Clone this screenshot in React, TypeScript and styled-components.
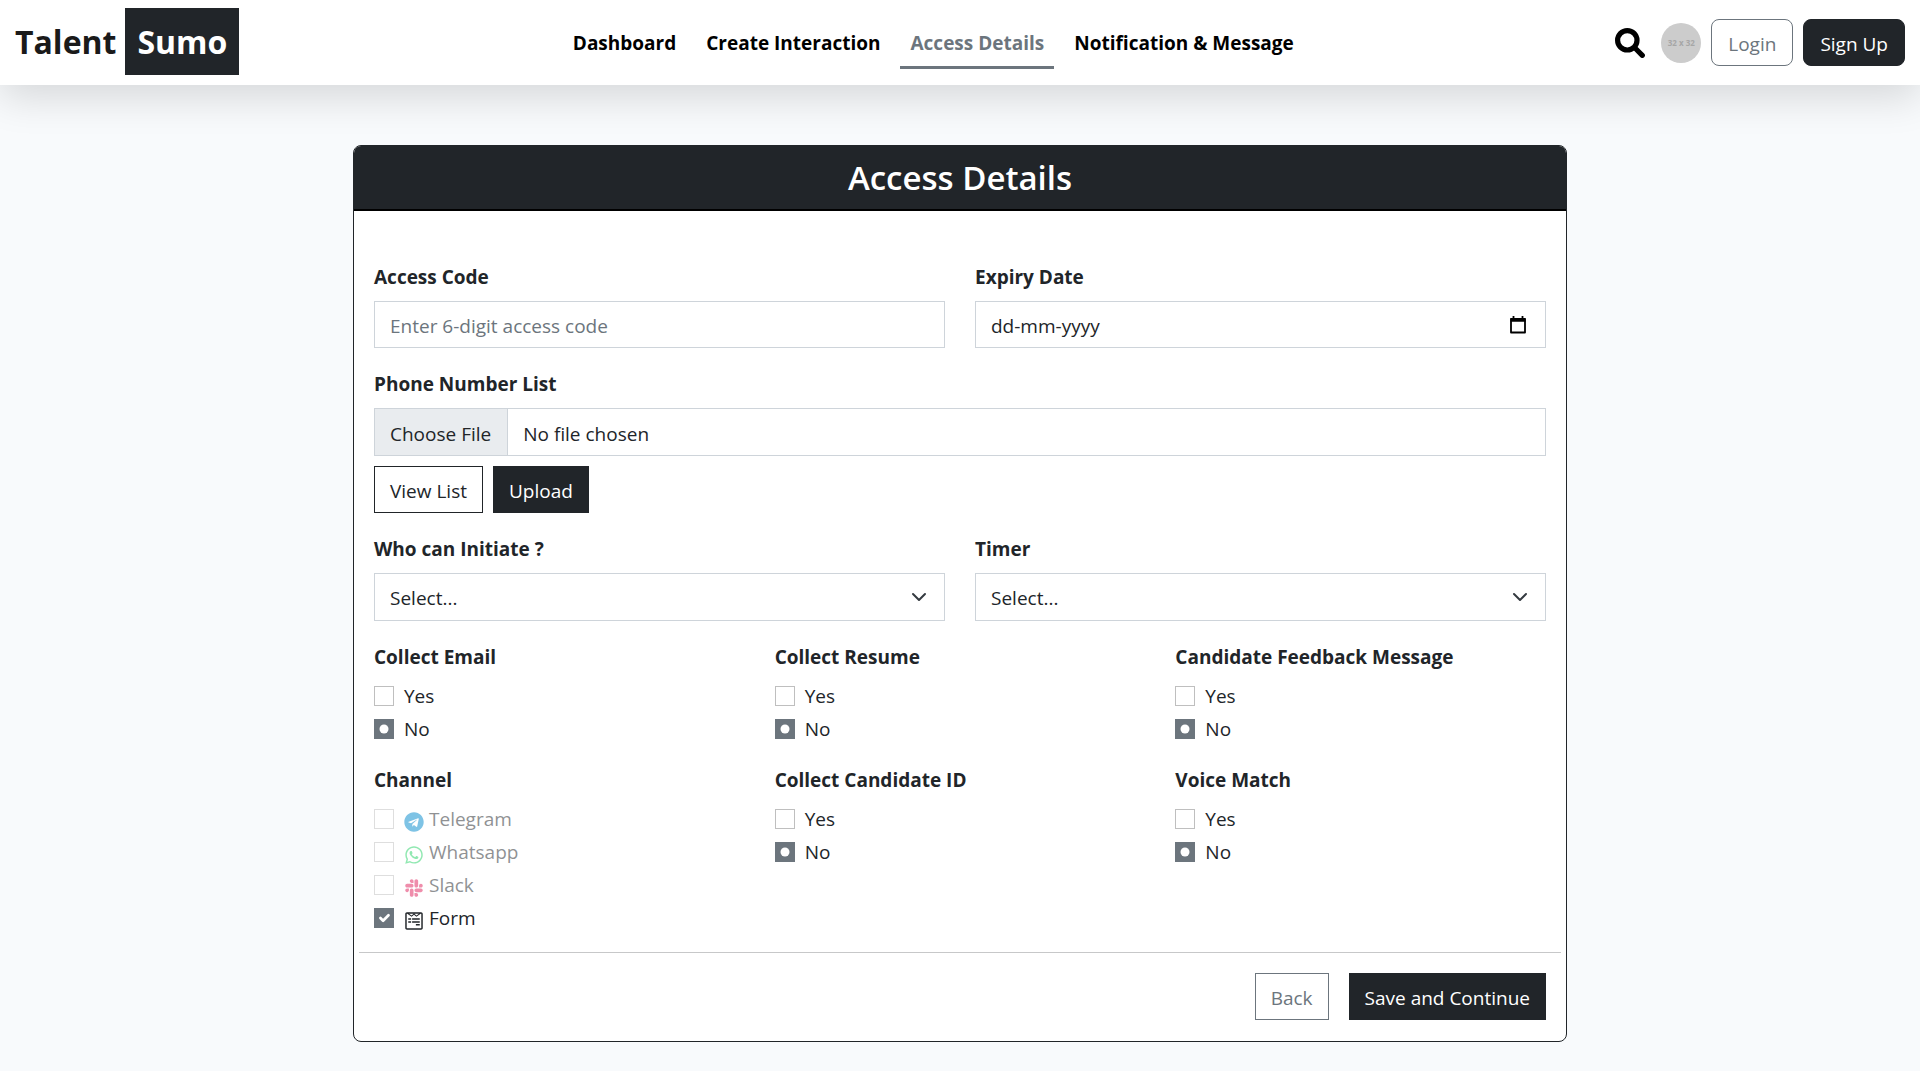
import React, { useState } from "react";
import styled, { createGlobalStyle, css } from "styled-components";
import { FaSlack, FaTelegram, FaWhatsapp, FaWpforms } from "react-icons/fa";

const DARK = "#212529";
const GREY = "#6c757d";
const LINE = "#ced4da";

const svgUrl = (body: string) => `url("data:image/svg+xml,${encodeURIComponent(body)}")`;
const chevron = svgUrl(
  "<svg xmlns='http://www.w3.org/2000/svg' viewBox='0 0 16 16'><path fill='none' stroke='#343a40' stroke-linecap='round' stroke-linejoin='round' stroke-width='2' d='m2 5 6 6 6-6'/></svg>"
);
const dot = svgUrl("<svg xmlns='http://www.w3.org/2000/svg' viewBox='-4 -4 8 8'><circle r='2' fill='#fff'/></svg>");
const tick = svgUrl(
  "<svg xmlns='http://www.w3.org/2000/svg' viewBox='0 0 20 20'><path fill='none' stroke='#fff' stroke-linecap='round' stroke-linejoin='round' stroke-width='3' d='m6 10 3 3 6-6'/></svg>"
);

const GlobalStyle = createGlobalStyle`
  *, *::before, *::after { box-sizing: border-box; }
  body {
    margin: 0;
    background: #f8fafc;
    color: ${DARK};
    font-family: "Open Sans", "Noto Sans", sans-serif;
    font-size: 19px;
    line-height: 30px;
  }
  button, input, select { font: inherit; color: inherit; border-radius: 0; }
`;

const Header = styled.header`
  display: flex;
  align-items: center;
  justify-content: space-between;
  padding: 8px 15px;
  min-height: 85px;
  background: #fff;
  box-shadow: 0 12px 40px rgba(0, 0, 0, 0.14);
`;

const Brand = styled.a`
  display: flex;
  align-items: center;
  gap: 9px;
  align-self: flex-start;
  margin-right: 12px;
  color: #1a1a1a;
  font-size: 32px;
  font-weight: 700;
  line-height: 67px;
  text-decoration: none;
`;

const BrandBox = styled.span`
  padding: 0 12px;
  background: ${DARK};
  color: #fff;
`;

const Nav = styled.nav`
  display: flex;
  gap: 10px;
`;

const NavLink = styled.a<{ $active?: boolean }>`
  padding: 12px 10px 8px;
  border-bottom: 3px solid ${(p) => (p.$active ? GREY : "transparent")};
  color: ${(p) => (p.$active ? GREY : "#000")};
  font-weight: 700;
  text-decoration: none;
`;

const Actions = styled.div`
  display: flex;
  align-items: center;
  gap: 10px;
`;

const IconButton = styled.button`
  display: flex;
  padding: 0;
  border: 0;
  background: none;
  cursor: pointer;
`;

const SearchButton = styled(IconButton)`
  margin-right: 6px;
`;

const Avatar = styled.span`
  display: grid;
  place-items: center;
  width: 40px;
  height: 40px;
  border-radius: 50%;
  background: #ccc;
  color: #a6a6a6;
  font-size: 8px;
  font-weight: 700;
  line-height: 8px;
`;

const Button = styled.button<{ $tone?: "solid" | "outline" | "muted"; $round?: boolean }>`
  height: 47px;
  padding: 2px ${(p) => (p.$round ? "16px" : "15px")} 0;
  border: 1px solid ${DARK};
  border-radius: ${(p) => (p.$round ? "8px" : "0")};
  background: #fff;
  cursor: pointer;
  ${(p) => p.$tone === "solid" && css`background: ${DARK}; color: #fff;`}
  ${(p) => p.$tone === "muted" && css`border-color: ${GREY}; color: ${GREY};`}
`;

const Main = styled.main`
  padding: 60px 16px 30px;
`;

const Card = styled.form`
  max-width: 1214px;
  margin: 0 auto;
  border: 1px solid ${DARK};
  border-radius: 8px;
  background: #fff;
  overflow: hidden;
`;

const CardTitle = styled.h1`
  margin: 0;
  padding-top: 1px;
  border-bottom: 2px solid #000;
  background: ${DARK};
  color: #fff;
  font-size: 33px;
  font-weight: 600;
  line-height: 62px;
  text-align: center;
`;

const Fields = styled.div`
  display: grid;
  gap: 20px;
  padding: 50px 20px 19px;
`;

const Columns = styled.div<{ $count: number }>`
  display: grid;
  grid-template-columns: repeat(${(p) => p.$count}, minmax(0, 1fr));
  gap: 20px 30px;
`;

const Field = styled.div`
  display: grid;
  gap: 10px;
  align-content: start;
`;

const Label = styled.label`
  padding-top: 2px;
  font-weight: 700;
  line-height: 28px;
`;

const control = css`
  width: 100%;
  border: 1px solid ${LINE};
  background-color: #fff;
  outline-color: ${GREY};
`;

const TextInput = styled.input`
  ${control}
  height: 47px;
  padding: 2px 15px 0;
  &::placeholder { color: ${GREY}; opacity: 1; }
`;

const DateBox = styled.div`
  ${control}
  display: flex;
  align-items: center;
  height: 47px;
  padding: 0 18px 0 15px;
`;

const DateInput = styled.input`
  flex: 1;
  min-width: 0;
  padding: 2px 0 0;
  border: 0;
  outline: 0;
  background: none;
  &::placeholder { color: ${DARK}; opacity: 1; }
`;

const FileInput = styled.input`
  ${control}
  height: 48px;
  padding: 0;
  line-height: 46px;
  &::file-selector-button {
    height: 46px;
    margin: 0 15px 0 0;
    padding: 2px 16px 0 15px;
    border: 0;
    border-right: 1px solid ${LINE};
    background: #e9ecef;
    color: ${DARK};
    font: inherit;
  }
`;

const Select = styled.select`
  ${control}
  height: 48px;
  padding: 2px 45px 0 15px;
  appearance: none;
  background-image: ${chevron};
  background-repeat: no-repeat;
  background-position: right 17px center;
  background-size: 16px 16px;
`;

const ButtonRow = styled.div<{ $end?: boolean }>`
  display: flex;
  justify-content: ${(p) => (p.$end ? "flex-end" : "flex-start")};
  gap: ${(p) => (p.$end ? "20px" : "10px")};
  ${(p) => p.$end && css`padding: 20px 20px 21px;`}
`;

const Group = styled.fieldset`
  min-width: 0;
  margin: 0;
  padding: 0;
  border: 0;
`;

const Legend = styled.legend`
  margin-bottom: 10px;
  padding: 2px 0 0;
  font-weight: 700;
  line-height: 28px;
`;

const Choices = styled.div`
  display: grid;
  gap: 3px;
`;

const Choice = styled.label<{ $faded?: boolean }>`
  display: flex;
  align-items: center;
  gap: 10px;
  opacity: ${(p) => (p.$faded ? 0.5 : 1)};
`;

const Box = styled.input`
  width: 20px;
  height: 20px;
  margin: 0;
  appearance: none;
  border: 1px solid rgba(0, 0, 0, 0.25);
  background: #fff center / 100% no-repeat;
  &:checked { border-color: ${GREY}; background-color: ${GREY}; }
  &[type="radio"]:checked { background-image: ${dot}; }
  &[type="checkbox"]:checked { background-image: ${tick}; }
`;

const ChannelName = styled.span<{ $tint: string }>`
  display: flex;
  gap: 5px;
  svg {
    width: 20px;
    height: 20px;
    margin-top: 8px;
    color: ${(p) => p.$tint};
  }
`;

const Divider = styled.hr`
  height: 1px;
  margin: 0 5px;
  border: 0;
  background: #c7c8c9;
`;

const SearchIcon = () => (
  <svg width="30" height="30" viewBox="0 0 30 30" fill="none" stroke="#000" strokeLinecap="round" aria-hidden="true">
    <circle cx="12.3" cy="12.3" r="9.7" strokeWidth="5.2" />
    <path d="M20 20l7.3 7.3" strokeWidth="5.2" />
  </svg>
);

const CalendarIcon = () => (
  <svg width="18" height="20" viewBox="0 0 18 20" fill="none" stroke="#000" aria-hidden="true">
    <path d="M2 4h14v13.5H2z" strokeWidth="1.8" strokeLinejoin="round" />
    <path d="M1.5 5h15" strokeWidth="3.5" />
    <path d="M4.5 1v3M13.5 1v3" strokeWidth="1.8" />
  </svg>
);

const YesNo = ({ title, name }: { title: string; name: string }) => {
  const [value, setValue] = useState("No");
  return (
    <Group>
      <Legend>{title}</Legend>
      <Choices>
        {["Yes", "No"].map((option) => (
          <Choice key={option}>
            <Box type="radio" name={name} checked={value === option} onChange={() => setValue(option)} />
            {option}
          </Choice>
        ))}
      </Choices>
    </Group>
  );
};

const channels = [
  { name: "Telegram", Icon: FaTelegram, tint: "#0088cc", disabled: true },
  { name: "Whatsapp", Icon: FaWhatsapp, tint: "#25d366", disabled: true },
  { name: "Slack", Icon: FaSlack, tint: "#e01e5a", disabled: true },
  { name: "Form", Icon: FaWpforms, tint: DARK, disabled: false },
];

const Channels = () => (
  <Group>
    <Legend>Channel</Legend>
    <Choices>
      {channels.map(({ name, Icon, tint, disabled }) => (
        <Choice key={name} $faded={disabled}>
          <Box type="checkbox" name="channel" value={name} disabled={disabled} defaultChecked={!disabled} />
          <ChannelName $tint={tint}>
            <Icon aria-hidden="true" />
            {name}
          </ChannelName>
        </Choice>
      ))}
    </Choices>
  </Group>
);

const links = ["Dashboard", "Create Interaction", "Access Details", "Notification & Message"];

export default function App() {
  return (
    <>
      <GlobalStyle />
      <Header>
        <Brand href="#">
          Talent <BrandBox>Sumo</BrandBox>
        </Brand>
        <Nav>
          {links.map((link) => (
            <NavLink key={link} href="#" $active={link === "Access Details"}>
              {link}
            </NavLink>
          ))}
        </Nav>
        <Actions>
          <SearchButton type="button" aria-label="Search">
            <SearchIcon />
          </SearchButton>
          <Avatar>32 x 32</Avatar>
          <Button type="button" $tone="muted" $round>Login</Button>
          <Button type="button" $tone="solid" $round>Sign Up</Button>
        </Actions>
      </Header>
      <Main>
        <Card onSubmit={(e) => e.preventDefault()}>
          <CardTitle>Access Details</CardTitle>
          <Fields>
            <Columns $count={2}>
              <Field>
                <Label htmlFor="code">Access Code</Label>
                <TextInput id="code" type="text" placeholder="Enter 6-digit access code" />
              </Field>
              <Field>
                <Label htmlFor="expiry">Expiry Date</Label>
                <DateBox>
                  <DateInput id="expiry" type="text" inputMode="numeric" placeholder="dd-mm-yyyy" />
                  <IconButton type="button" aria-label="Pick a date">
                    <CalendarIcon />
                  </IconButton>
                </DateBox>
              </Field>
            </Columns>
            <Field>
              <Label htmlFor="phones">Phone Number List</Label>
              <FileInput id="phones" type="file" />
              <ButtonRow>
                <Button type="button" $tone="outline">View List</Button>
                <Button type="button" $tone="solid">Upload</Button>
              </ButtonRow>
            </Field>
            <Columns $count={2}>
              <Field>
                <Label htmlFor="initiator">Who can Initiate ?</Label>
                <Select id="initiator">
                  <option>Select...</option>
                </Select>
              </Field>
              <Field>
                <Label htmlFor="timer">Timer</Label>
                <Select id="timer">
                  <option>Select...</option>
                </Select>
              </Field>
            </Columns>
            <Columns $count={3}>
              <YesNo title="Collect Email" name="email" />
              <YesNo title="Collect Resume" name="resume" />
              <YesNo title="Candidate Feedback Message" name="feedback" />
              <Channels />
              <YesNo title="Collect Candidate ID" name="candidate-id" />
              <YesNo title="Voice Match" name="voice" />
            </Columns>
          </Fields>
          <Divider />
          <ButtonRow $end>
            <Button type="button" $tone="muted">Back</Button>
            <Button type="submit" $tone="solid">Save and Continue</Button>
          </ButtonRow>
        </Card>
      </Main>
    </>
  );
}
